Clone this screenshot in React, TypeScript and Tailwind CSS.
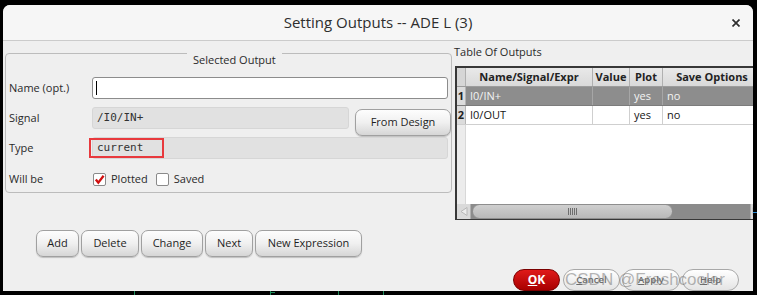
import React from "react";

const btn =
  "flex items-center justify-center h-[27px] rounded-[7px] border border-[#a0a0a0] bg-linear-to-b from-[#fdfdfd] via-[#f0f0f0] to-[#d6d6d6] shadow-[0_1px_1px_rgba(0,0,0,0.2)] text-[11px] text-[#1e1e1e]";

const pill =
  "relative flex items-center justify-center h-[22px] rounded-full border border-[#a8a8a8] bg-linear-to-b from-[#ffffff] to-[#e4e4e4] text-[9.5px] font-semibold text-[#6a6a6a]";

function Check({ checked }: { checked: boolean }) {
  return (
    <span className="w-[13px] h-[13px] bg-white border border-[#8a8a8a] rounded-[2px] flex items-center justify-center">
      {checked && (
        <svg width="11" height="11" viewBox="0 0 11 11">
          <path d="M1.8 5.6 L4.3 8.6 L9.6 1.8" stroke="#d01010" strokeWidth="2.3" fill="none" strokeLinejoin="miter" />
        </svg>
      )}
    </span>
  );
}

function Row({
  n,
  name,
  plot,
  save,
  selected,
}: {
  n: string;
  name: string;
  plot: string;
  save: string;
  selected: boolean;
}) {
  const cell = selected
    ? "h-full flex items-center pl-[4px] border-r border-[#a6a6a6] text-[#f3f3f3]"
    : "h-full flex items-center pl-[4px] border-r border-[#cfcfcf] text-[#151515]";
  return (
    <div
      className={
        selected
          ? "flex h-[19px] shrink-0 bg-[#8d8d8d] border-b border-[#7c7c7c]"
          : "flex h-[19px] shrink-0 bg-white border-b border-[#cfcfcf]"
      }
    >
      <div className="w-[9px] h-full bg-[#dcdcdc] border-r border-[#b5b5b5] flex items-center justify-center text-[11px] font-bold text-[#222] shrink-0">
        {n}
      </div>
      <div className={cell + " w-[127px] shrink-0"}>{name}</div>
      <div className={cell + " w-[37px] shrink-0"}></div>
      <div className={cell + " w-[33px] shrink-0"}>{plot}</div>
      <div className={cell + " w-[98px] shrink-0"}>{save}</div>
    </div>
  );
}

export default function App() {
  return (
    <div className="w-[757px] h-[295px] bg-black pt-[5px] pl-[3px] overflow-hidden relative font-['Open_Sans',sans-serif]">
      <div className="w-[750px] h-[286px] bg-[#efefef] rounded-t-[7px] flex flex-col overflow-hidden">
        {/* title bar */}
        <div className="relative h-[36px] shrink-0 bg-[#f6f6f6] border-b border-[#cbcbcb] flex items-center justify-center">
          <span className="text-[15px] font-medium text-[#2e2e2e] leading-none">Setting Outputs -- ADE L (3)</span>
          <svg className="absolute right-[13px] top-[14px]" width="8" height="8" viewBox="0 0 8 8">
            <path d="M0.5 0.5 L7.5 7.5 M7.5 0.5 L0.5 7.5" stroke="#2e2e2e" strokeWidth="1.7" />
          </svg>
        </div>

        {/* body */}
        <div className="flex flex-col flex-1">
          <div className="flex">
            {/* Selected Output group */}
            <div className="ml-[2px] mt-[12px] w-[447px] h-[140px] border border-[#bcbcbc] rounded-[4px] relative px-[3px] flex flex-col">
              <div className="absolute left-[181px] top-[-2px] px-[6px] bg-[#efefef] text-[11px] leading-[15px] text-[#2a2a2a]">
                Selected Output
              </div>

              {/* Name */}
              <div className="flex items-center h-[22px] mt-[23px]">
                <span className="w-[83px] text-[11px] text-[#2a2a2a]">Name (opt.)</span>
                <div className="flex-1 h-[22px] bg-white border border-[#8c8c8c] rounded-[3px] flex items-center pl-[3px]">
                  <span className="w-[1px] h-[14px] bg-black"></span>
                </div>
              </div>

              {/* Signal */}
              <div className="flex items-start h-[22px] mt-[8px]">
                <span className="w-[83px] h-[22px] flex items-center text-[11px] text-[#2a2a2a]">Signal</span>
                <div className="w-[257px] h-[22px] bg-[#e1e1e1] rounded-[3px] border border-[#d6d6d6] flex items-center pl-[4px] font-['DejaVu_Sans_Mono',monospace] text-[11px] text-[#333]">
                  /I0/IN+
                </div>
                <div className={btn + " ml-[6px] mt-[2px] w-[96px] -mr-[3px] shrink-0"}>From Design</div>
              </div>

              {/* Type */}
              <div className="flex items-center h-[22px] mt-[8px]">
                <span className="w-[83px] text-[11px] text-[#2a2a2a]">Type</span>
                <div className="relative flex-1 h-[22px] bg-[#e1e1e1] rounded-[3px] border border-[#d6d6d6] flex items-center pl-[4px] font-['DejaVu_Sans_Mono',monospace] text-[11px] text-[#333]">
                  current
                  <div className="absolute left-[-4px] top-[0px] w-[75px] h-[20px] border-2 border-[#e8393d]"></div>
                </div>
              </div>

              {/* Will be */}
              <div className="flex items-center h-[20px] mt-[10px]">
                <span className="w-[84px] text-[11px] text-[#2a2a2a]">Will be</span>
                <Check checked={true} />
                <span className="ml-[5px] text-[11px] text-[#2a2a2a]">Plotted</span>
                <span className="ml-[8px]">
                  <Check checked={false} />
                </span>
                <span className="ml-[5px] text-[11px] text-[#2a2a2a]">Saved</span>
              </div>
            </div>

            {/* Table of outputs */}
            <div className="flex-1 flex flex-col ml-[1px]">
              <div className="pl-[1px] mt-[3px] h-[15px] text-[11px] leading-[15px] text-[#2a2a2a]">Table Of Outputs</div>
              <div className="ml-[2px] mt-[7px] h-[154px] border-l-2 border-t-2 border-b border-[#383838] bg-white flex flex-col overflow-hidden text-[11px]">
                {/* header */}
                <div className="flex h-[19px] shrink-0 bg-linear-to-b from-[#e9e9e9] to-[#d9d9d9] border-b border-[#9c9c9c] font-bold text-[#222]">
                  <div className="w-[9px] h-full border-r border-[#b0b0b0] shrink-0 bg-[#d6d6d6]"></div>
                  <div className="w-[127px] h-full flex items-center justify-center border-r border-[#b0b0b0] shrink-0">Name/Signal/Expr</div>
                  <div className="w-[37px] h-full flex items-center justify-center border-r border-[#b0b0b0] shrink-0">Value</div>
                  <div className="w-[33px] h-full flex items-center justify-center border-r border-[#b0b0b0] shrink-0">Plot</div>
                  <div className="w-[98px] h-full flex items-center justify-center shrink-0 whitespace-nowrap">Save Options</div>
                </div>
                <Row n="1" name="I0/IN+" plot="yes" save="no" selected={true} />
                <Row n="2" name="I0/OUT" plot="yes" save="no" selected={false} />
                <div className="flex-1 flex">
                  <div className="w-[9px] bg-[#ececec] border-r border-[#d8d8d8]"></div>
                  <div className="flex-1 bg-white"></div>
                </div>
                {/* scrollbar */}
                <div className="h-[15px] shrink-0 flex bg-[#8b8b8b]">
                  <div className="w-[14px] h-full bg-[#dadada] border-r border-[#b0b0b0] flex items-center justify-center">
                    <svg width="8" height="9" viewBox="0 0 8 9">
                      <path d="M7 0.5 L1 4.5 L7 8.5 Z" fill="#ececec" stroke="#b8b8b8" strokeWidth="1" />
                    </svg>
                  </div>
                  <div className="ml-[1px] w-[201px] h-full rounded-full bg-linear-to-b from-[#cfcfcf] to-[#b9b9b9] border border-[#8e8e8e] flex items-center justify-center gap-[1px]">
                    <span className="w-[1px] h-[7px] bg-[#6e6e6e]"></span>
                    <span className="w-[1px] h-[7px] bg-[#6e6e6e]"></span>
                    <span className="w-[1px] h-[7px] bg-[#6e6e6e]"></span>
                    <span className="w-[1px] h-[7px] bg-[#6e6e6e]"></span>
                    <span className="w-[1px] h-[7px] bg-[#6e6e6e]"></span>
                  </div>
                  <div className="flex-1"></div>
                  <div className="w-[11px] h-full bg-[#dadada] border-l border-[#b0b0b0] flex items-center justify-center">
                    <svg width="8" height="9" viewBox="0 0 8 9">
                      <path d="M1 0.5 L7 4.5 L1 8.5 Z" fill="#ececec" stroke="#b8b8b8" strokeWidth="1" />
                    </svg>
                  </div>
                </div>
              </div>
            </div>
          </div>

          {/* action buttons */}
          <div className="flex gap-[2px] ml-[33px] mt-[10px]">
            <div className={btn + " w-[43px]"}>Add</div>
            <div className={btn + " w-[58px]"}>Delete</div>
            <div className={btn + " w-[62px]"}>Change</div>
            <div className={btn + " w-[48px]"}>Next</div>
            <div className={btn + " w-[107px]"}>New Expression</div>
          </div>

          {/* OK / Cancel / Apply / Help */}
          <div className="flex gap-[2px] ml-[510px] mt-[12px]">
            <div className="flex items-center justify-center w-[47px] h-[22px] rounded-full border border-[#7a0000] bg-linear-to-b from-[#e01a1a] to-[#a80000] text-[12px] font-bold text-white">
              <span>
                <span className="underline">O</span>K
              </span>
            </div>
            <div className={pill + " w-[57px] ml-[1px]"}>
              <span>
                <span className="underline">C</span>ancel
              </span>
            </div>
            <div className={pill + " w-[58px]"}>
              <span>
                <span className="underline">A</span>pply
              </span>
            </div>
            <div className={pill + " w-[57px]"}>
              <span>
                <span className="underline">H</span>elp
              </span>
            </div>
          </div>
        </div>
      </div>

      {/* watermark */}
      <div className="absolute left-[565px] top-[269px] text-[17px] leading-[22px] font-['Liberation_Sans',sans-serif] text-[rgba(120,120,120,0.55)] whitespace-nowrap pointer-events-none">
        CSDN @Freshcooler
      </div>

      {/* stray desktop lines */}
      <div className="absolute left-[134px] top-[291px] w-[1px] h-[4px] bg-[#1f8a5a]"></div>
      <div className="absolute left-[270px] top-[291px] w-[1px] h-[4px] bg-[#1f8a5a]"></div>
      <div className="absolute left-[270px] top-[292px] w-[5px] h-[1px] bg-[#1f8a5a]"></div>
      <div className="absolute left-[338px] top-[291px] w-[1px] h-[4px] bg-[#1f8a5a]"></div>
      <div className="absolute left-[383px] top-[291px] w-[1px] h-[4px] bg-[#1f8a5a]"></div>
      <div className="absolute left-[753px] top-[212px] w-[4px] h-[1px] bg-[#2a8ad0]"></div>
    </div>
  );
}
